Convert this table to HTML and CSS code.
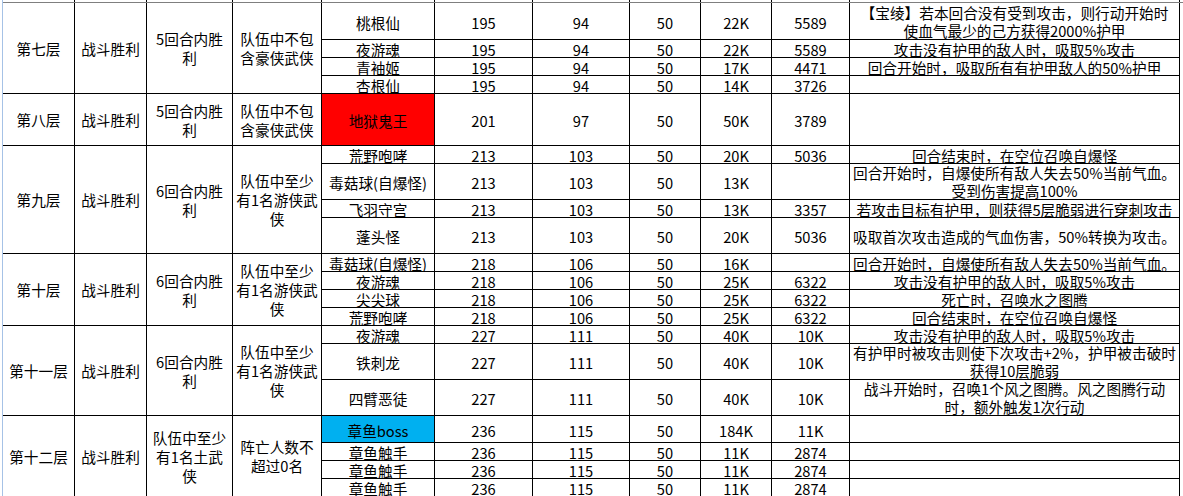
FILE: index.html
```html
<!DOCTYPE html>
<html lang="zh-CN">
<head>
<meta charset="utf-8">
<title>关卡表</title>
<link rel="stylesheet" href="styles.css">
</head>
<body>
<div class="frame">
  <div class="grid strip">
    <div class="c"></div><div class="c"></div><div class="c"></div><div class="c"></div><div class="c"></div><div class="c"></div><div class="c"></div><div class="c"></div><div class="c"></div><div class="c"></div><div class="c"></div>
  </div>
  <div class="freeze"></div>
  <div class="grid main">
    <!-- 第七层 -->
    <div class="c m r4">第七层</div>
    <div class="c m r4">战斗胜利</div>
    <div class="c m r4 ml">5回合内胜<br>利</div>
    <div class="c m r4 ml">队伍中不包<br>含豪侠武侠</div>
    <div class="c">桃根仙</div><div class="c">195</div><div class="c">94</div><div class="c">50</div><div class="c">22K</div><div class="c">5589</div>
    <div class="c d2">【宝绫】若本回合没有受到攻击，则行动开始时<br>使血气最少的己方获得2000%护甲</div>
    <div class="c">夜游魂</div><div class="c">195</div><div class="c">94</div><div class="c">50</div><div class="c">22K</div><div class="c">5589</div>
    <div class="c">攻击没有护甲的敌人时，吸取5%攻击</div>
    <div class="c">青袖姬</div><div class="c">195</div><div class="c">94</div><div class="c">50</div><div class="c">17K</div><div class="c">4471</div>
    <div class="c">回合开始时，吸取所有有护甲敌人的50%护甲</div>
    <div class="c">杏根仙</div><div class="c">195</div><div class="c">94</div><div class="c">50</div><div class="c">14K</div><div class="c">3726</div>
    <div class="c"></div>

    <!-- 第八层 -->
    <div class="c m">第八层</div>
    <div class="c m">战斗胜利</div>
    <div class="c m ml">5回合内胜<br>利</div>
    <div class="c m ml">队伍中不包<br>含豪侠武侠</div>
    <div class="c red">地狱鬼王</div><div class="c">201</div><div class="c">97</div><div class="c">50</div><div class="c">50K</div><div class="c">3789</div>
    <div class="c"></div>

    <!-- 第九层 -->
    <div class="c m r4">第九层</div>
    <div class="c m r4">战斗胜利</div>
    <div class="c m r4 ml">6回合内胜<br>利</div>
    <div class="c m r4 ml">队伍中至少<br>有1名游侠武<br>侠</div>
    <div class="c">荒野咆哮</div><div class="c">213</div><div class="c">103</div><div class="c">50</div><div class="c">20K</div><div class="c">5036</div>
    <div class="c">回合结束时，在空位召唤自爆怪</div>
    <div class="c">毒菇球(自爆怪)</div><div class="c">213</div><div class="c">103</div><div class="c">50</div><div class="c">13K</div><div class="c"></div>
    <div class="c d2">回合开始时，自爆使所有敌人失去50%当前气血。<br>受到伤害提高100%</div>
    <div class="c">飞羽守宫</div><div class="c">213</div><div class="c">103</div><div class="c">50</div><div class="c">13K</div><div class="c">3357</div>
    <div class="c">若攻击目标有护甲，则获得5层脆弱进行穿刺攻击</div>
    <div class="c">蓬头怪</div><div class="c">213</div><div class="c">103</div><div class="c">50</div><div class="c">20K</div><div class="c">5036</div>
    <div class="c">吸取首次攻击造成的气血伤害，50%转换为攻击。</div>

    <!-- 第十层 -->
    <div class="c m r4">第十层</div>
    <div class="c m r4">战斗胜利</div>
    <div class="c m r4 ml">6回合内胜<br>利</div>
    <div class="c m r4 ml">队伍中至少<br>有1名游侠武<br>侠</div>
    <div class="c">毒菇球(自爆怪)</div><div class="c">218</div><div class="c">106</div><div class="c">50</div><div class="c">16K</div><div class="c"></div>
    <div class="c">回合开始时，自爆使所有敌人失去50%当前气血。</div>
    <div class="c">夜游魂</div><div class="c">218</div><div class="c">106</div><div class="c">50</div><div class="c">25K</div><div class="c">6322</div>
    <div class="c">攻击没有护甲的敌人时，吸取5%攻击</div>
    <div class="c">尖尖球</div><div class="c">218</div><div class="c">106</div><div class="c">50</div><div class="c">25K</div><div class="c">6322</div>
    <div class="c">死亡时，召唤水之图腾</div>
    <div class="c">荒野咆哮</div><div class="c">218</div><div class="c">106</div><div class="c">50</div><div class="c">25K</div><div class="c">6322</div>
    <div class="c">回合结束时，在空位召唤自爆怪</div>

    <!-- 第十一层 -->
    <div class="c m r3">第十一层</div>
    <div class="c m r3">战斗胜利</div>
    <div class="c m r3 ml">6回合内胜<br>利</div>
    <div class="c m r3 ml">队伍中至少<br>有1名游侠武<br>侠</div>
    <div class="c">夜游魂</div><div class="c">227</div><div class="c">111</div><div class="c">50</div><div class="c">40K</div><div class="c">10K</div>
    <div class="c">攻击没有护甲的敌人时，吸取5%攻击</div>
    <div class="c">铁刺龙</div><div class="c">227</div><div class="c">111</div><div class="c">50</div><div class="c">40K</div><div class="c">10K</div>
    <div class="c d2">有护甲时被攻击则使下次攻击+2%，护甲被击破时<br>获得10层脆弱</div>
    <div class="c">四臂恶徒</div><div class="c">227</div><div class="c">111</div><div class="c">50</div><div class="c">40K</div><div class="c">10K</div>
    <div class="c d2">战斗开始时，召唤1个风之图腾。风之图腾行动<br>时，额外触发1次行动</div>

    <!-- 第十二层 -->
    <div class="c m r4">第十二层</div>
    <div class="c m r4">战斗胜利</div>
    <div class="c m r4 ml">队伍中至少<br>有1名土武<br>侠</div>
    <div class="c m r4 ml">阵亡人数不<br>超过0名</div>
    <div class="c blue">章鱼boss</div><div class="c">236</div><div class="c">115</div><div class="c">50</div><div class="c">184K</div><div class="c">11K</div>
    <div class="c"></div>
    <div class="c">章鱼触手</div><div class="c">236</div><div class="c">115</div><div class="c">50</div><div class="c">11K</div><div class="c">2874</div>
    <div class="c"></div>
    <div class="c">章鱼触手</div><div class="c">236</div><div class="c">115</div><div class="c">50</div><div class="c">11K</div><div class="c">2874</div>
    <div class="c"></div>
    <div class="c">章鱼触手</div><div class="c">236</div><div class="c">115</div><div class="c">50</div><div class="c">11K</div><div class="c">2874</div>
    <div class="c"></div>
  </div>
</div>
</body>
</html>
```
FILE: styles.css
```css
html, body {
  margin: 0;
  padding: 0;
  background: #ffffff;
  overflow: hidden;
}

body {
  font-family: "Noto Sans CJK SC", "Noto Sans", sans-serif;
  font-size: 14.67px;
  color: #000000;
  width: 1183px;
  height: 496px;
}

.frame {
  margin-left: 2px;
  border-left: 1px solid #a6c2e6;
  height: 496px;
  overflow: hidden;
}

.grid {
  display: grid;
  width: max-content;
  grid-template-columns: 71px 71px 85px 88px 112px 97px 96px 70px 70px 77px 329px;
  column-gap: 1px;
  row-gap: 1px;
  background: #000000;
  border-right: 1px solid #000000;
}

.strip {
  grid-template-rows: 2px;
}

.freeze {
  height: 1px;
  background: #7f7f7f;
}

.main {
  grid-template-rows: 36px 17px 17px 17px 51px 17px 35px 17px 35px 17px 17px 17px 17px 17px 35px 35px 26px 17px 17px 17px;
}

.c {
  background: #ffffff;
  display: flex;
  align-items: center;
  justify-content: center;
  text-align: center;
  white-space: nowrap;
  line-height: 15px;
  padding-top: 2px;
  box-sizing: border-box;
  min-width: 0;
}

.strip .c {
  padding: 0;
}

.m {
  padding-top: 0;
}

.ml {
  line-height: 19px;
}

.d2 {
  line-height: 18px;
  padding-top: 1px;
}

.r3 { grid-row: span 3; }
.r4 { grid-row: span 4; }

.red { background: #ff0000; }
.blue { background: #00b0f0; }
```
